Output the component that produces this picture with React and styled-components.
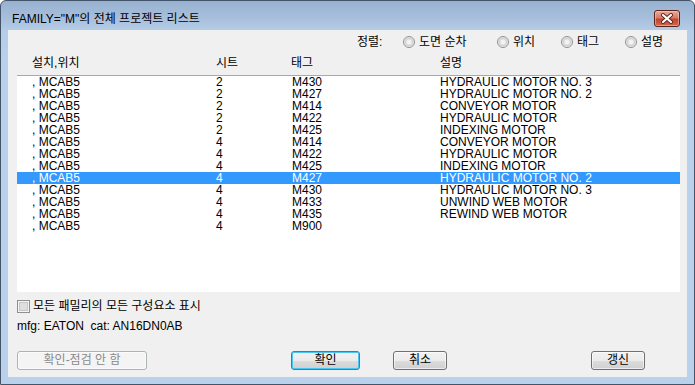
import React from "react";
import styled, { createGlobalStyle } from "styled-components";

const GlobalStyle = createGlobalStyle`
  html, body { margin: 0; padding: 0; background: #ffffff; }
  body { font-family: "Liberation Sans", "Noto Sans CJK KR", sans-serif; font-size: 12px; }
  * { box-sizing: border-box; }
`;

const KR = `"Liberation Sans", "Noto Sans CJK KR", sans-serif`;

const Window = styled.div`
  width: 695px;
  height: 385px;
  border: 1px solid #435468;
  border-radius: 6px 6px 0 0;
  background: linear-gradient(to bottom, #97b1d0 0px, #a8c0dc 18px, #b6cde7 30px, #b9d1ea 60px, #b9d1ea 100%);
  display: flex;
  flex-direction: column;
  padding: 0 7px 7px;
  overflow: hidden;
`;

const TitleBar = styled.div`
  height: 29px;
  padding-top: 6px;
  display: flex;
  align-items: center;
`;

const TitleText = styled.div`
  padding-left: 4px;
  font-family: ${KR};
  font-size: 12px;
  line-height: 14px;
  color: #000;
`;

const CloseButton = styled.div`
  margin-left: auto;
  margin-right: 7px;
  width: 26px;
  height: 17px;
  border: 1px solid #5b2418;
  border-radius: 3px;
  background: linear-gradient(to bottom, #e9a99c 0%, #d97a66 45%, #c4452c 55%, #d06a4f 100%);
  box-shadow: inset 0 0 0 1px rgba(255, 210, 200, 0.5);
  display: flex;
  align-items: center;
  justify-content: center;
`;

const Client = styled.div`
  flex: 1;
  background: #f0f0f0;
  display: flex;
  flex-direction: column;
  padding: 5px 7px 0 9px;
`;

const SortRow = styled.div`
  margin-left: 340px;
  height: 14px;
  display: grid;
  grid-template-columns: 46px 94px 64px 64px auto;
  align-items: center;
  font-family: ${KR};
  line-height: 14px;
`;

const Option = styled.div`
  display: flex;
  align-items: center;
  gap: 4px;
`;

const Radio = styled.span`
  width: 12px;
  height: 12px;
  border-radius: 50%;
  border: 1px solid #8e9092;
  background: radial-gradient(circle at 50% 50%, #f2f2f2 0 2px, #cfcfcf 3.5px, #e6e6e6 4.5px, #fafafa 6px);
  flex: none;
`;

const Columns = styled.div`
  display: grid;
  grid-template-columns: 184px 75px 149px 1fr;
  padding-left: 15px;
`;

const Header = styled(Columns)`
  margin-top: 8px;
  height: 18px;
  font-family: ${KR};
  line-height: 12px;
  color: #000;
`;

const HeaderCell = styled.div`
  margin-left: ${(p) => p.$shift || 0}px;
`;

const List = styled.div`
  height: 217px;
  background: #ffffff;
  border-top: 1px solid #a9a9a9;
  display: flex;
  flex-direction: column;
`;

const Row = styled(Columns)`
  height: 12px;
  line-height: 12px;
  font-family: "Liberation Sans", sans-serif;
  font-size: 12px;
  white-space: nowrap;
  color: ${(p) => (p.$selected ? "#ffffff" : "#000000")};
  background: ${(p) => (p.$selected ? "#3399ff" : "transparent")};
`;

const Cell = styled.div`
  padding-left: ${(p) => p.$pad || 0}px;
`;

const CheckRow = styled.label`
  margin-top: 8px;
  height: 13px;
  display: flex;
  align-items: center;
  gap: 3px;
  font-family: ${KR};
  line-height: 13px;
`;

const CheckBox = styled.span`
  width: 13px;
  height: 13px;
  border: 1px solid #8e8f8f;
  background: #f4f4f4;
  box-shadow: inset 0 0 0 1px #f4f4f4, inset 0 0 0 2px #c7c7c7, inset 0 0 0 6px #dedede;
  flex: none;
`;

const InfoText = styled.div`
  margin-top: 7px;
  height: 12px;
  line-height: 12px;
  font-family: "Liberation Sans", sans-serif;
  white-space: pre;
`;

const ButtonRow = styled.div`
  margin-top: 19px;
  display: flex;
  align-items: center;
`;

const Button = styled.div`
  margin-left: ${(p) => p.$ml || 0}px;
  width: ${(p) => p.$w}px;
  height: 19px;
  border-radius: 3px;
  font-family: ${KR};
  font-size: 12px;
  line-height: 17px;
  text-align: center;
  border: 1px solid ${(p) => (p.$disabled ? "#adb2b5" : p.$default ? "#3c7fb1" : "#707070")};
  color: ${(p) => (p.$disabled ? "#8a8a8a" : "#000")};
  background: ${(p) =>
    p.$disabled
      ? "#f4f4f4"
      : "linear-gradient(to bottom, #f2f2f2 0%, #ebebeb 50%, #dddddd 51%, #cfcfcf 100%)"};
  box-shadow: ${(p) => (p.$default ? "inset 0 0 0 1px #48c6f4" : "inset 0 0 0 1px rgba(255,255,255,0.6)")};
`;

const rows = [
  ["2", "M430", "HYDRAULIC MOTOR NO. 3"],
  ["2", "M427", "HYDRAULIC MOTOR NO. 2"],
  ["2", "M414", "CONVEYOR MOTOR"],
  ["2", "M422", "HYDRAULIC MOTOR"],
  ["2", "M425", "INDEXING MOTOR"],
  ["4", "M414", "CONVEYOR MOTOR"],
  ["4", "M422", "HYDRAULIC MOTOR"],
  ["4", "M425", "INDEXING MOTOR"],
  ["4", "M427", "HYDRAULIC MOTOR NO. 2"],
  ["4", "M430", "HYDRAULIC MOTOR NO. 3"],
  ["4", "M433", "UNWIND WEB MOTOR"],
  ["4", "M435", "REWIND WEB MOTOR"],
  ["4", "M900", ""],
];

export default function App() {
  return (
    <>
      <GlobalStyle />
      <Window>
        <TitleBar>
          <TitleText>{'FAMILY="M"의 전체 프로젝트 리스트'}</TitleText>
          <CloseButton>
            <svg width="14" height="11" viewBox="0 0 14 11">
              <path d="M3 2 L11 9 M11 2 L3 9" stroke="#5a2a20" strokeWidth="4" strokeLinecap="round" />
              <path d="M3 2 L11 9 M11 2 L3 9" stroke="#ffffff" strokeWidth="2.2" strokeLinecap="round" />
            </svg>
          </CloseButton>
        </TitleBar>
        <Client>
          <SortRow>
            <span>정렬:</span>
            <Option><Radio />도면 순차</Option>
            <Option><Radio />위치</Option>
            <Option><Radio />태그</Option>
            <Option><Radio />설명</Option>
          </SortRow>
          <Header>
            <HeaderCell>설치,위치</HeaderCell>
            <HeaderCell>시트</HeaderCell>
            <HeaderCell>태그</HeaderCell>
            <HeaderCell>설명</HeaderCell>
          </Header>
          <List>
            {rows.map((r, i) => (
              <Row key={i} $selected={i === 8}>
                <Cell>, MCAB5</Cell>
                <Cell>{r[0]}</Cell>
                <Cell $pad={1}>{r[1]}</Cell>
                <Cell>{r[2]}</Cell>
              </Row>
            ))}
          </List>
          <CheckRow>
            <CheckBox />
            모든 패밀리의 모든 구성요소 표시
          </CheckRow>
          <InfoText>{"mfg: EATON  cat: AN16DN0AB"}</InfoText>
          <ButtonRow>
            <Button $w={130} $disabled>확인-점검 안 함</Button>
            <Button $w={69} $ml={144} $default>확인</Button>
            <Button $w={54} $ml={33}>취소</Button>
            <Button $w={54} $ml={144}>갱신</Button>
          </ButtonRow>
        </Client>
      </Window>
    </>
  );
}
